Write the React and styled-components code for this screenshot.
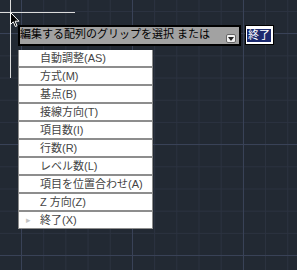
import React from 'react';
import styled, { createGlobalStyle } from 'styled-components';

const GlobalStyle = createGlobalStyle`
  html, body {
    margin: 0;
    padding: 0;
    background: #222933;
  }
`;

const items = [
  '自動調整(AS)',
  '方式(M)',
  '基点(B)',
  '接線方向(T)',
  '項目数(I)',
  '行数(R)',
  'レベル数(L)',
  '項目を位置合わせ(A)',
  'Z 方向(Z)',
  '終了(X)',
];

const App = () => {
  return (
    <Canvas>
      <GlobalStyle />
      <PromptRow>
        <PromptBox>
          <PromptText>編集する配列のグリップを選択 または</PromptText>
          <DropBtn>
            <svg width="6" height="4" viewBox="0 0 6 4">
              <path d="M0 0 L6 0 L3 4 Z" fill="#222" />
            </svg>
          </DropBtn>
        </PromptBox>
        <InputBox>
          <Selected>終了</Selected>
        </InputBox>
      </PromptRow>
      <Menu>
        {items.map((label, i) => (
          <MenuItem key={label}>
            {i === items.length - 1 && <Arrow>▸</Arrow>}
            {label}
          </MenuItem>
        ))}
      </Menu>
      <CrossH />
      <CrossV />
      <Pointer width="10" height="16" viewBox="0 0 10 16">
        <path
          d="M0.5 0.5 L0.5 12.5 L3.3 9.8 L5.3 14.5 L7 13.8 L5.1 9.2 L9 9.2 Z"
          fill="#000"
          stroke="#fff"
          strokeWidth="1"
        />
      </Pointer>
    </Canvas>
  );
};

export default App;

const Canvas = styled.div`
  position: relative;
  width: 297px;
  height: 270px;
  overflow: hidden;
  box-sizing: border-box;
  padding: 25px 0 0 18px;
  background-color: #222933;
  background-image:
    linear-gradient(to right, #394257 1px, transparent 1px),
    linear-gradient(to bottom, #394257 1px, transparent 1px),
    linear-gradient(to right, #2b3240 1px, transparent 1px),
    linear-gradient(to bottom, #2b3240 1px, transparent 1px);
  background-size: 111px 100%, 100% 111px, 22.2px 100%, 100% 22.2px;
  background-position: 21px 0, 0 33px, 21px 0, 0 11px;
  font-family: "Liberation Sans", "Noto Sans CJK JP", sans-serif;
`;

const PromptRow = styled.div`
  display: flex;
  align-items: flex-start;
  gap: 4px;
`;

const PromptBox = styled.div`
  display: flex;
  justify-content: space-between;
  width: 223px;
  height: 21px;
  box-sizing: border-box;
  border: 2px solid #000;
  background: #a2a2a2;
  padding: 0 3px 1px 0;
`;

const PromptText = styled.div`
  font-size: 11px;
  line-height: 15px;
  color: #000;
  white-space: nowrap;
`;

const DropBtn = styled.div`
  align-self: flex-end;
  display: flex;
  align-items: center;
  justify-content: center;
  width: 10px;
  height: 9px;
  box-sizing: border-box;
  background: #f2f2f2;
  border: 1px solid #666;
  border-radius: 2px;
`;

const InputBox = styled.div`
  display: flex;
  align-items: center;
  width: 29px;
  height: 20px;
  box-sizing: border-box;
  border: 1px solid #000;
  background: #fff;
  padding-left: 1px;
`;

const Selected = styled.span`
  background: #1c2a6e;
  color: #fff;
  font-size: 11px;
  line-height: 13px;
  padding: 0 1px;
`;

const Menu = styled.div`
  display: flex;
  flex-direction: column;
  gap: 2px;
  width: 135px;
  margin-top: 4px;
  box-sizing: border-box;
  background: #8d8d8d;
  padding: 0 1px 1px 1px;
`;

const MenuItem = styled.div`
  position: relative;
  height: 16px;
  background: #fff;
  padding-left: 21px;
  font-size: 11px;
  line-height: 16px;
  color: #444;
  white-space: nowrap;
`;

const Arrow = styled.span`
  position: absolute;
  left: 7px;
  top: 0;
  font-size: 9px;
  color: #c4c4c4;
`;

const CrossH = styled.div`
  position: absolute;
  left: 0;
  top: 12px;
  width: 75px;
  height: 1px;
  background: #dcdcdc;
`;

const CrossV = styled.div`
  position: absolute;
  left: 10px;
  top: 0;
  width: 1px;
  height: 78px;
  background: #dcdcdc;
`;

const Pointer = styled.svg`
  position: absolute;
  left: 10px;
  top: 12px;
`;
